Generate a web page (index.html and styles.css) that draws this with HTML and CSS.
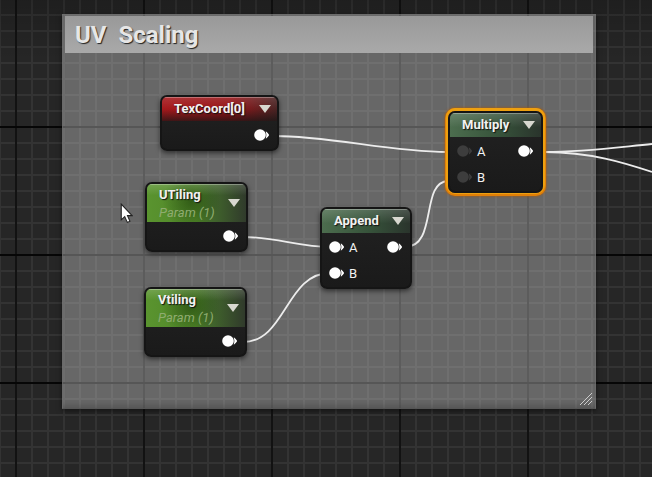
FILE: index.html
```
<!DOCTYPE html>
<html lang="en">
<head>
<meta charset="utf-8">
<title>Material graph</title>
<link rel="stylesheet" href="styles.css">
</head>
<body>
<svg class="defs" width="0" height="0" aria-hidden="true">
  <symbol id="pin" viewBox="0 0 16 12">
    <circle cx="6" cy="6" r="5.8"/>
    <path d="M11.8 2.2 Q14 4 15.2 6 Q14 8 11.8 9.8 Q13 6 11.8 2.2 Z"/>
  </symbol>
</svg>
<main class="graph">
  <section class="comment">
    <h1 class="comment-title">UV&nbsp; Scaling</h1>
    <svg class="grip" viewBox="0 0 13 13" aria-hidden="true"><path d="M0 12 L12 0 M4 12 L12 4 M8 12 L12 8"/></svg>
  </section>

  <svg class="wires" width="652" height="477" aria-hidden="true">
    <path d="M274 136 C330 136 390 152 447 152"/>
    <path d="M243 237 C275 237 300 247 330 247"/>
    <path d="M243 342 C286 342 286 273 330 273"/>
    <path d="M405 247 C438 247 420 182 448 181"/>
    <path d="M545 152 C585 152 620 147 652 144"/>
    <path d="M545 152 C590 152 625 163 652 172"/>
  </svg>

  <article class="node texcoord">
    <header class="head red"><h2>TexCoord[0]</h2><button class="toggle" aria-label="Collapse TexCoord"></button></header>
    <div class="pins"><div class="row"><svg class="pin out"><use href="#pin"/></svg></div></div>
  </article>

  <article class="node utiling">
    <header class="head green"><div class="param"><h2>UTiling</h2><p>Param (1)</p></div><button class="toggle" aria-label="Collapse UTiling"></button></header>
    <div class="pins"><div class="row"><svg class="pin out"><use href="#pin"/></svg></div></div>
  </article>

  <article class="node vtiling">
    <header class="head green"><div class="param"><h2>Vtiling</h2><p>Param (1)</p></div><button class="toggle" aria-label="Collapse Vtiling"></button></header>
    <div class="pins"><div class="row"><svg class="pin out"><use href="#pin"/></svg></div></div>
  </article>

  <article class="node append">
    <header class="head sage"><h2>Append</h2><button class="toggle" aria-label="Collapse Append"></button></header>
    <div class="pins">
      <div class="row"><svg class="pin"><use href="#pin"/></svg><span>A</span><svg class="pin out"><use href="#pin"/></svg></div>
      <div class="row"><svg class="pin"><use href="#pin"/></svg><span>B</span></div>
    </div>
  </article>

  <article class="node multiply selected">
    <header class="head sage"><h2>Multiply</h2><button class="toggle" aria-label="Collapse Multiply"></button></header>
    <div class="pins">
      <div class="row"><svg class="pin dim"><use href="#pin"/></svg><span>A</span><svg class="pin out"><use href="#pin"/></svg></div>
      <div class="row"><svg class="pin dim"><use href="#pin"/></svg><span>B</span></div>
    </div>
  </article>

  <svg class="cursor" viewBox="0 0 12 20" aria-hidden="true"><path d="M1 1 V16 L4.3 13 L6.8 18.5 L9.3 17.4 L6.9 12 H11.3 Z"/></svg>
</main>
</body>
</html>
```
FILE: styles.css
```
* {
  box-sizing: border-box;
}

body,
h1,
h2,
p {
  margin: 0;
}

body {
  font-family: Roboto, "Liberation Sans", sans-serif;
  color: #f2f2f2;
  background: #262626;
}

.defs {
  position: absolute;
}

.graph {
  position: relative;
  min-height: 100vh;
  overflow: hidden;
  background-color: #262626;
  background-image:
    linear-gradient(#060606 2px, transparent 2px),
    linear-gradient(90deg, #121212 2px, transparent 2px),
    linear-gradient(#333 2px, transparent 2px),
    linear-gradient(90deg, #333 2px, transparent 2px);
  background-size: 128px 128px, 128px 128px, 16px 16px, 16px 16px;
  background-position: 0 126px, 15px 0, 0 14px, 15px 0;
}

.graph::before {
  content: "";
  position: absolute;
  inset: 0;
  background: linear-gradient(rgba(0, 0, 0, 0.2), transparent 60px);
}

.comment {
  position: absolute;
  left: 62px;
  top: 14px;
  width: 534px;
  height: 395px;
  padding: 1px 2px;
  background: rgba(184, 184, 184, 0.45);
  border: 1px solid rgba(110, 110, 110, 0.5);
  border-bottom-color: #555;
  box-shadow: 0 2px 5px rgba(0, 0, 0, 0.5), inset 0 -6px 6px -4px rgba(50, 50, 50, 0.4);
}

.comment-title {
  padding: 2px 10px 0;
  font-size: 24px;
  line-height: 35px;
  font-weight: 700;
  color: #e6e6e6;
  text-shadow: 1px 1px 1px #222;
  background: linear-gradient(#999, #a9a9a9);
}

.grip {
  position: absolute;
  right: 2px;
  bottom: 2px;
  width: 13px;
  height: 13px;
  fill: none;
  stroke: #ccc;
}

.wires {
  position: absolute;
  left: 0;
  top: 0;
  fill: none;
  stroke: #ececec;
  stroke-width: 1.8;
}

.node {
  position: absolute;
  overflow: hidden;
  border: 2px solid #151515;
  border-radius: 7px;
  background: linear-gradient(#222, #1a1a1a);
  box-shadow: 0 2px 5px rgba(0, 0, 0, 0.55);
}

.texcoord { left: 160px; top: 95px; width: 119px; }
.utiling { left: 145px; top: 182px; width: 103px; }
.vtiling { left: 144px; top: 287px; width: 103px; }
.append { left: 320px; top: 207px; width: 92px; }
.multiply { left: 448px; top: 111px; width: 95px; }

.selected {
  box-shadow: 0 -1px 0 2px #eda010, 0 0 0 3px #e07f08, 0 0 3px 3px #b05a00;
}

.head {
  display: flex;
  justify-content: space-between;
  align-items: center;
  padding: 0 6px 0 12px;
  box-shadow: inset 0 1px 0 rgba(255, 255, 255, 0.3);
}

.head h2 {
  font-size: 13px;
  line-height: 24px;
  font-weight: 700;
  text-shadow: 1px 1px 1px #111;
}

.param {
  padding-bottom: 2px;
}

.head .param h2 {
  line-height: 22px;
}

.head p {
  font-size: 13px;
  line-height: 14px;
  font-style: italic;
  color: #8fac70;
}

.red {
  background: linear-gradient(rgba(255, 255, 255, 0.12), transparent 50%, rgba(20, 20, 20, 0.7)), linear-gradient(90deg, #a5191c, #951518 60%, #4a2424);
}

.green {
  background: linear-gradient(rgba(255, 255, 255, 0.16), transparent 30%), radial-gradient(circle at 45% 45%, rgba(20, 50, 5, 0.5), transparent 50%), linear-gradient(90deg, #5a942f, #4f8528 50%, #42682c 65%, #303a2b);
}

.sage {
  background: linear-gradient(rgba(255, 255, 255, 0.16), transparent 60%), linear-gradient(90deg, #4c6d4e, #36523a 55%, #2a342c);
}

.toggle {
  width: 12px;
  height: 8px;
  padding: 0;
  border: 0;
  background: #d8d8d0;
  clip-path: polygon(0 0, 100% 0, 50% 100%);
}

.pins {
  padding: 1px 7px;
}

.row {
  display: flex;
  align-items: center;
  gap: 4px;
  height: 26px;
  font-size: 13px;
}

.pin {
  width: 16px;
  height: 12px;
  fill: #fff;
}

.out {
  margin-left: auto;
}

.dim {
  fill: #3d3d3d;
}

.cursor {
  position: absolute;
  left: 120px;
  top: 203px;
  width: 13px;
  height: 21px;
  fill: #fff;
  stroke: #222;
  stroke-width: 1;
}
```
